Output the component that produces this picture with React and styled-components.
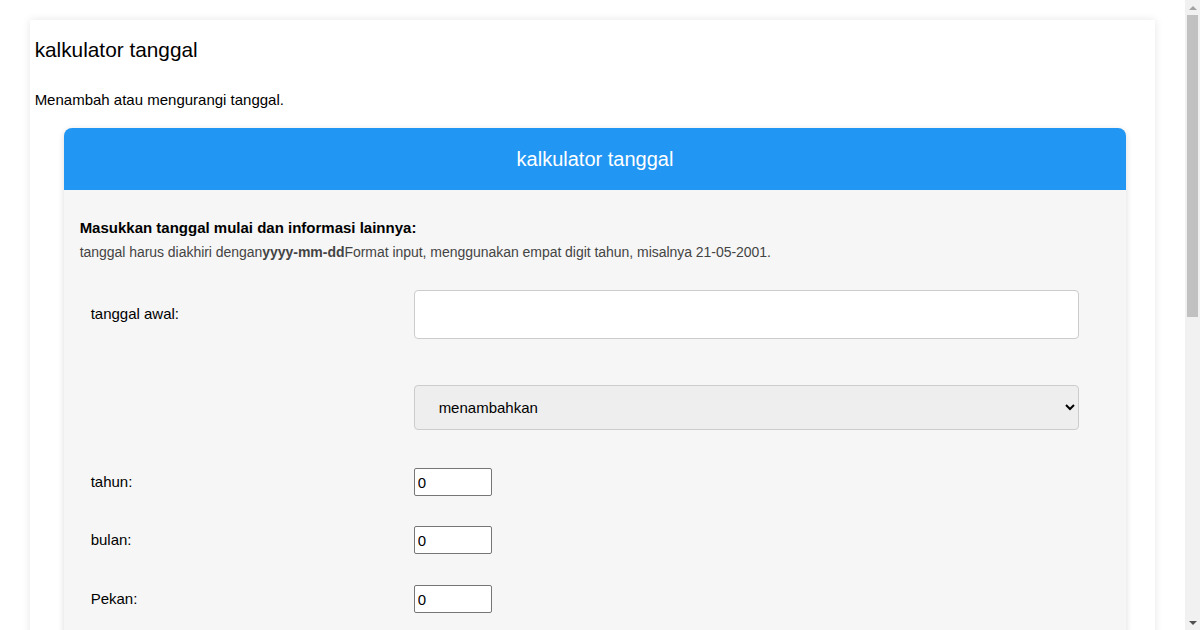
import React from 'react';
import styled, { createGlobalStyle } from 'styled-components';

const GlobalStyle = createGlobalStyle`
  html, body {
    margin: 0;
    padding: 0;
    background: #fff;
    font-family: "Liberation Sans", Arial, sans-serif;
    color: #000;
  }
  body {
    margin-right: 15px;
  }
`;

const Page = styled.div`
  width: 95%;
  margin: 20px auto 0;
  padding: 1px 5px 280px;
  box-sizing: border-box;
  background: #fff;
  box-shadow: 0 0 8px rgba(0,0,0,0.1);
`;

const Title = styled.h1`
  font-size: 20.8px;
  font-weight: normal;
  line-height: 23px;
  margin: 17px 0 30px;
`;

const Intro = styled.p`
  font-size: 15px;
  line-height: 17px;
  margin: 0 0 20px;
`;

const Calculator = styled.div`
  margin: 0 24px 0 29px;
  background: #f6f6f6;
  border-radius: 8px;
  box-shadow: 0 2px 6px rgba(0,0,0,0.15);
  overflow: hidden;
`;

const Header = styled.div`
  height: 62px;
  background: #2196f3;
  color: #fff;
  font-size: 20px;
  display: flex;
  align-items: center;
  justify-content: center;
`;

const Body = styled.div`
  padding: 29px 16px 40px;
`;

const Lead = styled.div`
  font-size: 15px;
  font-weight: bold;
  line-height: 17px;
  margin-bottom: 8px;
`;

const Hint = styled.div`
  font-size: 14px;
  line-height: 17px;
  color: #444;
  letter-spacing: -0.0025em;

  b {
    color: #444;
  }
`;

const Form = styled.div`
  display: flex;
  flex-direction: column;
  margin-top: 29px;
`;

const Row = styled.div`
  display: grid;
  grid-template-columns: 334px 665px;
  align-items: center;
  margin-top: ${p => p.$gap || 0}px;
`;

const Label = styled.label`
  font-size: 15px;
  line-height: 17px;
  padding: 0 0 2px 11px;
`;

const TextInput = styled.input`
  height: 49px;
  box-sizing: border-box;
  border: 1px solid #ccc;
  border-radius: 4px;
  background: #fff;
  font-size: 15px;
  padding: 0 10px;
`;

const Select = styled.select`
  height: 45px;
  box-sizing: border-box;
  border: 1px solid #ccc;
  border-radius: 4px;
  background: #eee;
  color: #000;
  font-family: "Liberation Sans", Arial, sans-serif;
  font-size: 15px;
  padding: 0 4px 0 20px;
`;

const NumberInput = styled.input`
  width: 78px;
  height: 28px;
  box-sizing: border-box;
  border: 1px solid #767676;
  border-radius: 2px;
  background: #fff;
  font-family: "Liberation Sans", Arial, sans-serif;
  font-size: 15px;
  padding: 0 3px;
`;

const Button = styled.button`
  background: #2196f3;
  color: #fff;
  border: none;
  border-radius: 4px;
  font-size: 15px;
  padding: 12px 24px;
  justify-self: start;
`;

/* browser-style vertical scrollbar, drawn over the right edge */
const Scrollbar = styled.div`
  position: fixed;
  top: 0;
  right: 0;
  width: 15px;
  height: 100vh;
  background: #f1f1f1;
  display: flex;
  flex-direction: column;
  align-items: center;
`;

const Arrow = styled.div`
  height: 15px;
  width: 15px;
  display: flex;
  align-items: center;
  justify-content: center;

  &::after {
    content: '';
    border-left: 4px solid transparent;
    border-right: 4px solid transparent;
    ${p => p.$down
      ? 'border-top: 4px solid #505050;'
      : 'border-bottom: 4px solid #a3a3a3;'}
  }
`;

const Thumb = styled.div`
  width: 11px;
  height: 302px;
  background: #c1c1c1;
`;

const Track = styled.div`
  flex: 1;
`;

const fields = [
  { label: 'tahun:', gap: 38 },
  { label: 'bulan:', gap: 30 },
  { label: 'Pekan:', gap: 31 },
  { label: 'hari:', gap: 31 },
];

export default function App() {
  return (
    <>
      <GlobalStyle />
      <Page>
        <Title>kalkulator tanggal</Title>
        <Intro>Menambah atau mengurangi tanggal.</Intro>
        <Calculator>
          <Header>kalkulator tanggal</Header>
          <Body>
            <Lead>Masukkan tanggal mulai dan informasi lainnya:</Lead>
            <Hint>
              tanggal harus diakhiri dengan<b>yyyy-mm-dd</b>Format input, menggunakan empat digit tahun, misalnya 21-05-2001.
            </Hint>
            <Form>
              <Row>
                <Label>tanggal awal:</Label>
                <TextInput type="text" />
              </Row>
              <Row $gap={46}>
                <span />
                <Select defaultValue="add">
                  <option value="add">menambahkan</option>
                  <option value="sub">mengurangi</option>
                </Select>
              </Row>
              {fields.map(f => (
                <Row key={f.label} $gap={f.gap}>
                  <Label>{f.label}</Label>
                  <NumberInput type="number" defaultValue={0} />
                </Row>
              ))}
              <Row $gap={40}>
                <span />
                <Button>menghitung</Button>
              </Row>
            </Form>
          </Body>
        </Calculator>
      </Page>
      <Scrollbar>
        <Arrow />
        <Thumb />
        <Track />
        <Arrow $down />
      </Scrollbar>
    </>
  );
}
